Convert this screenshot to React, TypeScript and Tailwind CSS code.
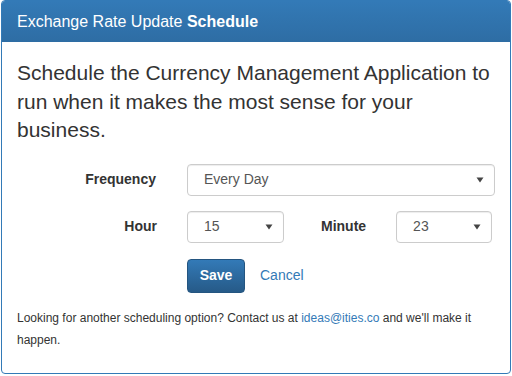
const Caret = () => (
  <svg width="8" height="6" viewBox="0 0 8 6" className="shrink-0">
    <path d="M0.5 0.5 L7.5 0.5 L4 5.5 Z" fill="#444" />
  </svg>
);

const FakeSelect = ({ value, className }: { value: string; className: string }) => (
  <div
    className={`flex h-[32px] items-center justify-between rounded-[4px] border border-[#ccc] bg-white pl-[16px] pr-[10px] text-[14px] text-[#555] shadow-[inset_0_1px_1px_rgba(0,0,0,0.075)] ${className}`}
  >
    <span>{value}</span>
    <Caret />
  </div>
);

const App = () => {
  return (
    <div className="h-[376px] w-[512px] bg-white pl-[1px] font-['Liberation_Sans',Arial,sans-serif] text-[#333]">
      <div className="h-[374px] w-[510px] overflow-hidden rounded-[4px] border border-[#337ab7] bg-white">
        <div className="flex h-[41px] items-center bg-gradient-to-b from-[#337ab7] to-[#2e6da4] px-[15px] text-[16px] text-white">
          <span>
            Exchange Rate Update <span className="font-bold">Schedule</span>
          </span>
        </div>
        <div className="px-[15px] pt-[17px]">
          <p className="text-[21px] leading-[28.5px]">
            Schedule the Currency Management Application to run when it makes the most sense for your
            business.
          </p>
          <div className="mt-[19px] flex items-center">
            <label className="w-[139px] text-right text-[14px] font-bold">Frequency</label>
            <FakeSelect value="Every Day" className="ml-[31px] w-[308px]" />
          </div>
          <div className="mt-[15px] flex items-center">
            <label className="w-[140px] text-right text-[14px] font-bold">Hour</label>
            <FakeSelect value="15" className="ml-[30px] w-[97px]" />
            <label className="ml-[37px] text-[14px] font-bold">Minute</label>
            <FakeSelect value="23" className="ml-[30px] w-[96px]" />
          </div>
          <div className="mt-[16px] flex items-center">
            <button className="ml-[170px] h-[34px] w-[58px] rounded-[4px] border border-[#245580] bg-gradient-to-b from-[#337ab7] to-[#265a88] text-[14px] font-bold text-white">
              Save
            </button>
            <a className="ml-[15px] text-[14px] text-[#337ab7]">Cancel</a>
          </div>
          <p className="mt-[14px] text-[12px] leading-[22px]">
            Looking for another scheduling option? Contact us at{" "}
            <a className="text-[#337ab7]">ideas@ities.co</a> and we'll make it happen.
          </p>
        </div>
      </div>
    </div>
  );
};

export default App;
